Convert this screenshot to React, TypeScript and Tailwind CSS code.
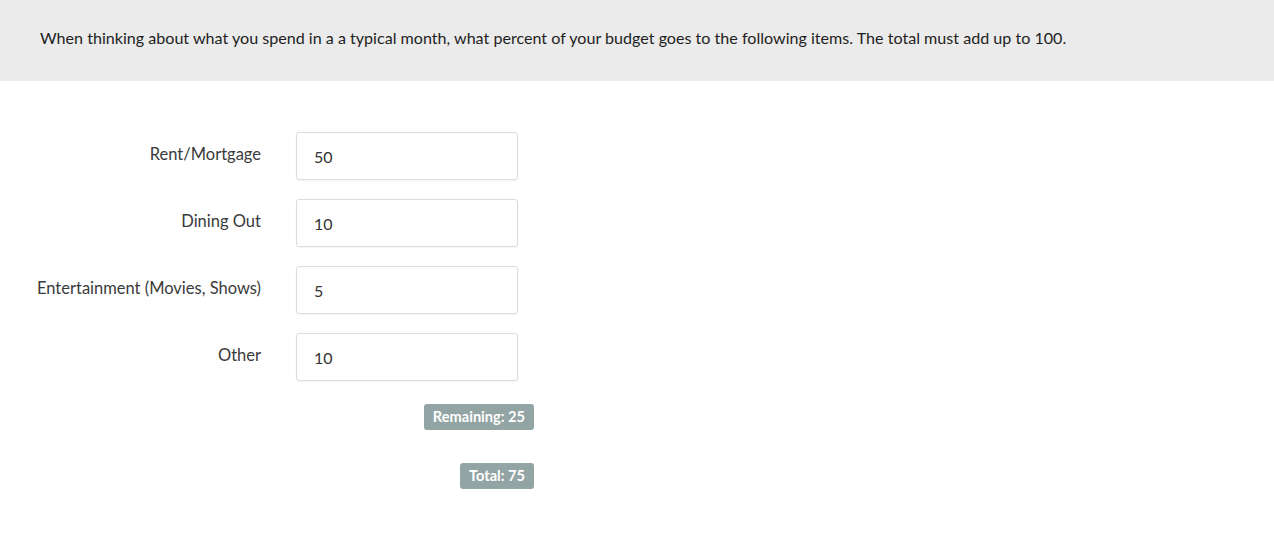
import { useState } from "react";

const items = [
  { label: "Rent/Mortgage", value: "50" },
  { label: "Dining Out", value: "10" },
  { label: "Entertainment (Movies, Shows)", value: "5" },
  { label: "Other", value: "10" },
];

export default function App() {
  const [values, setValues] = useState(items.map((i) => i.value));
  const total = values.reduce((s, v) => s + (parseInt(v) || 0), 0);

  return (
    <main className="min-h-screen bg-white font-['Lato','Liberation_Sans',sans-serif] text-[#333]">
      <div className="h-[81px] bg-[#ebebeb] flex items-center px-10 pb-[4px]">
        <p className="text-[16.1px] text-[#1e1e1e]">
          When thinking about what you spend in a a typical month, what percent of your budget goes to the following items. The total must add up to 100.
        </p>
      </div>

      <div className="pt-[51px] flex flex-col gap-[19px]">
        {items.map((item, i) => (
          <div key={item.label} className="flex items-start">
            <label className="w-[261px] pt-[10px] text-right text-[16.5px] text-[#3a3a3a]">
              {item.label}
            </label>
            <input
              value={values[i]}
              onChange={(e) => {
                const next = [...values];
                next[i] = e.target.value;
                setValues(next);
              }}
              className="ml-[35px] w-[222px] h-[48px] border border-[#dcdcdc] rounded-[3px] px-[17px] pt-[1px] text-[16px] text-[#333] outline-none shadow-[0_1px_2px_rgba(0,0,0,0.05)]"
            />
          </div>
        ))}
      </div>

      <div className="w-[534px] flex flex-col items-end">
        <span className="mt-[23px] h-[26px] px-[9px] flex items-center rounded-[3px] bg-[#93a4a4] text-white text-[14.6px] font-bold">
          Remaining: {100 - total}
        </span>
        <span className="mt-[33px] h-[26px] px-[9px] flex items-center rounded-[3px] bg-[#93a4a4] text-white text-[14.6px] font-bold">
          Total: {total}
        </span>
      </div>
    </main>
  );
}
